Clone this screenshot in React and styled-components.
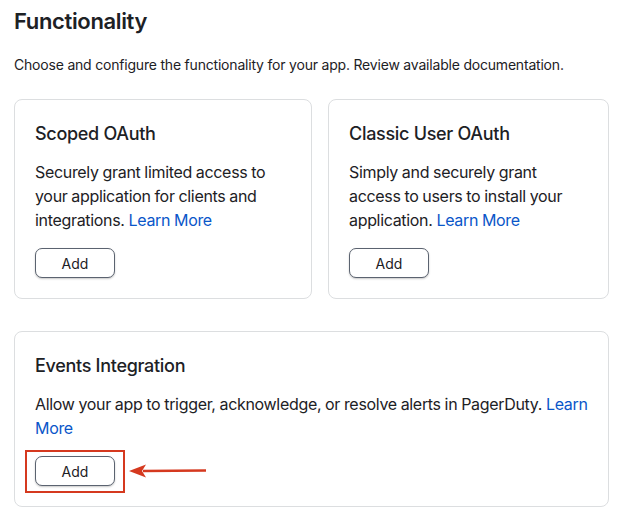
import React from "react";
import styled, { createGlobalStyle } from "styled-components";

const Global = createGlobalStyle`
  html, body { margin: 0; padding: 0; background: #ffffff; }
  body { font-family: Inter, "Noto Sans", "Liberation Sans", sans-serif; color: #1d2125; }
  * { box-sizing: border-box; }
`;

const Page = styled.main`
  width: 625px;
  padding: 7px 16px 0 14px;
`;

const Title = styled.h1`
  margin: 0;
  font-size: 22px;
  line-height: 28px;
  font-weight: 600;
  letter-spacing: -0.35px;
`;

const Intro = styled.p`
  margin: 20px 0 0;
  font-size: 14px;
  line-height: 20px;
  letter-spacing: -0.2px;
`;

const Grid = styled.div`
  margin-top: 24px;
  display: grid;
  grid-template-columns: 298px 281px;
  column-gap: 16px;
  row-gap: 32px;
`;

const Card = styled.section`
  grid-column: ${(p) => (p.$wide ? "1 / -1" : "auto")};
  border: 1px solid #dcdee0;
  border-radius: 8px;
  padding: 20px;
  background: #fff;
`;

const CardTitle = styled.h2`
  margin: 0;
  font-size: 18px;
  line-height: 28px;
  font-weight: 500;
  letter-spacing: -0.3px;
`;

const CardText = styled.p`
  margin: 12px 0 0;
  font-size: 16px;
  line-height: 24px;
  letter-spacing: -0.32px;
  word-spacing: -0.3px;
`;

const Link = styled.a`
  color: #0a56c9;
  text-decoration: none;
`;

const ButtonWrap = styled.div`
  position: relative;
  margin-top: 16px;
  display: flex;
  width: 80px;
`;

const AddButton = styled.button`
  width: 80px;
  height: 30px;
  border: 1px solid #5b6370;
  border-radius: 7px;
  background: #fff;
  box-shadow: 0 1px 2px rgba(0, 0, 0, 0.22);
  font-family: inherit;
  font-size: 14px;
  color: #1d2125;
  padding: 0;
`;

const Highlight = styled.div`
  position: absolute;
  left: -10px;
  top: -6px;
  width: 100px;
  height: 43px;
  border: 2px solid #d5391f;
  pointer-events: none;
`;

const Arrow = styled.svg`
  position: absolute;
  left: 94px;
  top: 7px;
`;

const cards = [
  {
    title: "Scoped OAuth",
    text: "Securely grant limited access to your application for clients and integrations.",
  },
  {
    title: "Classic User OAuth",
    text: "Simply and securely grant access to users to install your application.",
  },
  {
    title: "Events Integration",
    text: "Allow your app to trigger, acknowledge, or resolve alerts in PagerDuty.",
    wide: true,
    highlight: true,
  },
];

export default function App() {
  return (
    <>
      <Global />
      <Page>
        <Title>Functionality</Title>
        <Intro>
          Choose and configure the functionality for your app. Review available documentation.
        </Intro>
        <Grid>
          {cards.map((c) => (
            <Card key={c.title} $wide={c.wide}>
              <CardTitle>{c.title}</CardTitle>
              <CardText>
                {c.text} <Link href="#">Learn More</Link>
              </CardText>
              <ButtonWrap>
                <AddButton>Add</AddButton>
                {c.highlight && (
                  <>
                    <Highlight />
                    <Arrow width="80" height="16" viewBox="0 0 80 16">
                      <line x1="14" y1="8" x2="77" y2="7.5" stroke="#d5391f" strokeWidth="2.4" />
                      <polygon points="0,8 17,1.5 13,8 17,14.5" fill="#d5391f" />
                    </Arrow>
                  </>
                )}
              </ButtonWrap>
            </Card>
          ))}
        </Grid>
      </Page>
    </>
  );
}
